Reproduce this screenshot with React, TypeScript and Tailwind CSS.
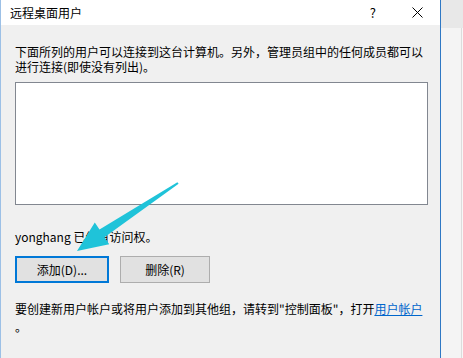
import React from 'react';

const font = { fontFamily: '"Noto Sans CJK SC", "Microsoft YaHei", sans-serif' };

function Arrow() {
  // cyan annotation arrow pointing at the add button
  return (
    <svg className="pointer-events-none absolute left-0 top-0" width="463" height="358" viewBox="0 0 463 358">
      <polygon
        points="178.6,183.8 104.5,237.2 109.2,244.2 77,251 94.8,222.6 99.5,229.6 177.4,182.2"
        fill="#1fc3d9"
      />
    </svg>
  );
}

export default function App() {
  return (
    <div className="relative flex h-[358px] w-[463px] overflow-hidden bg-[#f0f0f0]" style={font}>
      <div className="flex w-[441px] flex-col border-l border-r border-l-[#9cc0e6] border-r-[#2f78c4] bg-[#f0f0f0] text-[12px] text-[#000]">
        {/* title bar */}
        <div className="flex h-[25px] shrink-0 items-center bg-white pl-[9px]">
          <span className="leading-none">远程桌面用户</span>
          <span className="ml-auto mr-[36px] text-[13px] leading-none">?</span>
          <svg width="11" height="11" viewBox="0 0 11 11" className="mr-[17px]">
            <path d="M0.5 0.5 L10.5 10.5 M10.5 0.5 L0.5 10.5" stroke="#000" strokeWidth="1" />
          </svg>
        </div>

        <div className="flex flex-col px-[14px] pt-[19px]">
          <p className="leading-[15px]">
            下面所列的用户可以连接到这台计算机。另外，管理员组中的任何成员都可以进行连接(即使没有列出)。
          </p>
          <div className="mt-[8px] h-[123px] w-[413px] border border-[#828790] bg-white" />

          <p className="mt-[24px] leading-[15px]">yonghang 已经有访问权。</p>

          <div className="mt-[12px] flex gap-[11px]">
            <button className="flex h-[27px] w-[94px] items-center justify-center border-2 border-[#0078d7] bg-[#e1e1e1] text-[12px]">
              添加(D)...
            </button>
            <button className="flex h-[27px] w-[90px] items-center justify-center border border-[#adadad] bg-[#e1e1e1] text-[12px]">
              删除(R)
            </button>
          </div>

          <p className="mt-[17px] whitespace-nowrap leading-[18px]">
            要创建新用户帐户或将用户添加到其他组，请转到"控制面板"，打开
            <a className="text-[#0066cc] underline">用户帐户</a>
          </p>
          <p className="leading-[18px]">。</p>
        </div>
      </div>

      <div className="flex w-[22px] flex-col">
        <div className="h-[28px] bg-[#e8e8e8]" />
        <div className="flex flex-1 justify-end bg-[#f4f4f4]">
          <div className="w-px bg-[#dcdcdc]" />
          <div className="w-px bg-[#f7f7f7]" />
        </div>
      </div>

      <Arrow />
    </div>
  );
}
